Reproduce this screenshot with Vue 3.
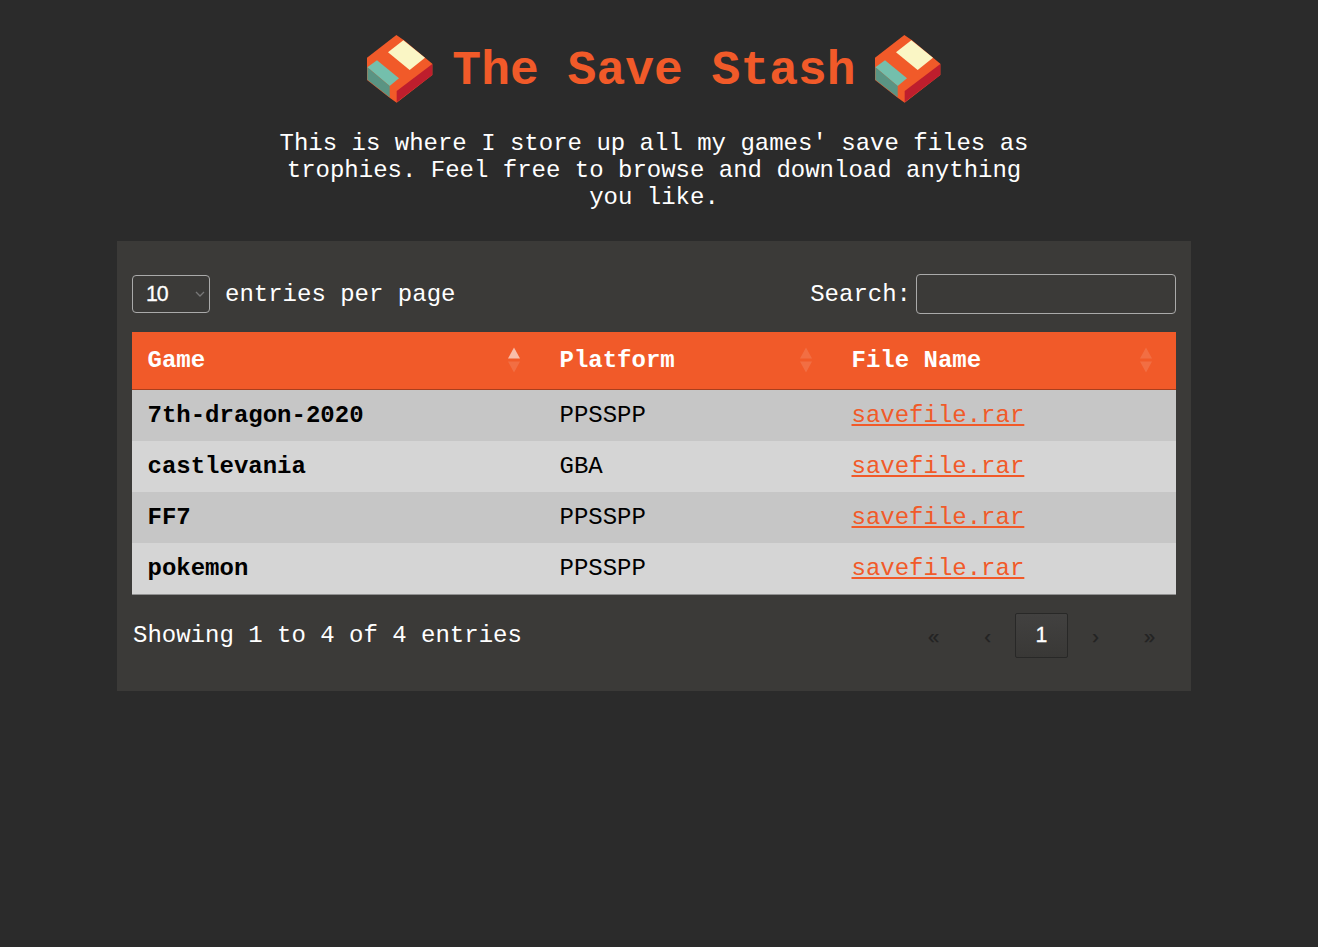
<script setup>
const logos = {
  body: '36,98 124,30 147,46 232,116 232,150 125,233 104,218 36,165',
  label: '145,46 210,98 164,135 99,82',
  shutterTop: '66,106 132,160 104,183 37,127',
  shutterSide: '37,127 104,183 104,217 37,164',
  edge: '232,117 232,150 125,232 125,198',
}
const columns = ['Game', 'Platform', 'File Name']
const rows = [
  { game: '7th-dragon-2020', platform: 'PPSSPP' },
  { game: 'castlevania', platform: 'GBA' },
  { game: 'FF7', platform: 'PPSSPP' },
  { game: 'pokemon', platform: 'PPSSPP' },
]
</script>

<template>
  <div class="page">
    <header>
      <div class="brand">
        <template v-for="n in 2" :key="n">
          <svg class="logo" viewBox="33 27 204 210">
            <polygon :points="logos.body" fill="#f15a29" />
            <polygon :points="logos.label" fill="#faf6c5" />
            <polygon :points="logos.shutterTop" fill="#74bfac" />
            <polygon :points="logos.shutterSide" fill="#5a9483" />
            <polygon :points="logos.edge" fill="#be1e2d" />
          </svg>
          <h1 v-if="n === 1">The Save Stash</h1>
        </template>
      </div>
      <p class="intro">This is where I store up all my games' save files as trophies. Feel free to browse and download anything you like.</p>
    </header>

    <main class="panel">
      <div class="controls">
        <label class="length">
          <span class="select"><span class="value">10</span>
            <svg viewBox="0 0 10 6"><path d="M1 1l4 4 4-4" fill="none" stroke="#777" stroke-width="1.3" /></svg>
          </span>
          entries per page
        </label>
        <label class="search">Search:<input type="text" /></label>
      </div>

      <table>
        <colgroup><col class="c1" /><col class="c2" /><col class="c3" /></colgroup>
        <thead>
          <tr>
            <th v-for="(c, i) in columns" :key="c">
              <div class="head">
                {{ c }}
                <svg class="sort" viewBox="0 0 12 26">
                  <path d="M6 0.5L12 11.5H0z" fill="#fff" :opacity="i === 0 ? 0.6 : 0.125" />
                  <path d="M0 14.5H12L6 25.5z" fill="#fff" opacity="0.125" />
                </svg>
              </div>
            </th>
          </tr>
        </thead>
        <tbody>
          <tr v-for="r in rows" :key="r.game">
            <td class="game">{{ r.game }}</td>
            <td>{{ r.platform }}</td>
            <td><a href="#">savefile.rar</a></td>
          </tr>
        </tbody>
      </table>

      <div class="footer">
        <div class="info">Showing 1 to 4 of 4 entries</div>
        <nav class="pager">
          <span>«</span><span>‹</span><span class="current">1</span><span>›</span><span>»</span>
        </nav>
      </div>
    </main>
  </div>
</template>

<style>
html, body { background: #2b2b2b; margin: 0; }
</style>

<style scoped>
.page {
  width: 1308px;
  height: 947px;
  overflow: hidden;
  box-sizing: border-box;
  padding-top: 34px;
  color: #fff;
  font: 24px/27px "Liberation Mono", "Courier New", monospace;
}
.brand { display: flex; justify-content: center; gap: 18.5px; height: 70px; }
.logo { width: 68px; height: 70px; flex: none; }
h1 { margin: 0; padding-top: 10px; font-size: 48px; line-height: 54px; color: #f15a29; white-space: nowrap; }
.intro { width: 760px; margin: 26px auto 0; text-align: center; }
.panel {
  box-sizing: border-box;
  width: 1074px;
  height: 450px;
  margin: 30px auto 0;
  padding: 33px 15px 0;
  background: #3b3a38;
}
.controls { display: flex; justify-content: space-between; align-items: center; height: 40px; }
.length, .search { display: flex; align-items: center; }
.length { gap: 15px; }
.select {
  box-sizing: border-box;
  display: flex;
  align-items: center;
  justify-content: space-between;
  width: 78px;
  height: 38px;
  padding: 0 4px 0 13px;
  border: 1px solid #aaa;
  border-radius: 4px;
  font: 21.33px/36px "Liberation Sans", Arial, sans-serif;
}
.value { letter-spacing: -1px; -webkit-text-stroke: 0.3px #fff; }
.select svg { width: 10px; height: 6px; }
.search { gap: 5px; }
.search input {
  box-sizing: border-box;
  width: 260px;
  height: 40px;
  margin: 0;
  border: 1px solid #aaa;
  border-radius: 4px;
  background: transparent;
  outline: none;
}
table { width: 1044px; margin-top: 18px; border-collapse: separate; border-spacing: 0; table-layout: fixed; color: #000; }
.c1 { width: 412px; }
.c2 { width: 292px; }
.c3 { width: 340px; }
th {
  box-sizing: border-box;
  height: 58px;
  padding: 0 24.5px 0 15.5px;
  background: #f15a29;
  border-bottom: 1px solid #a93f1e;
  color: #fff;
  text-align: left;
}
.head { display: flex; align-items: center; justify-content: space-between; }
.sort { width: 12px; height: 26px; margin: -1px 0 1px; }
td { box-sizing: border-box; height: 51px; padding: 0 15.5px; background: #d5d5d5; }
tbody tr:nth-child(odd) td { background: #c6c6c6; }
tbody tr:last-child td { height: 52px; border-bottom: 1px solid #909090; }
.game { font-weight: bold; }
a { color: #f15a29; text-decoration: underline; }
.footer { display: flex; justify-content: space-between; align-items: center; height: 45px; margin-top: 18px; }
.info { padding-left: 1px; }
.pager { display: flex; gap: 1px; font: 20px/45px "Liberation Sans", Arial, sans-serif; color: #232323; -webkit-text-stroke: 0.3px; }
.pager span { box-sizing: border-box; width: 53px; height: 45px; border: 1px solid transparent; text-align: center; }
.pager .current {
  border-color: #282827;
  border-radius: 2px;
  background: linear-gradient(#424140, #393836);
  color: #fff;
  font-size: 21.33px;
  line-height: 43px;
}
</style>
